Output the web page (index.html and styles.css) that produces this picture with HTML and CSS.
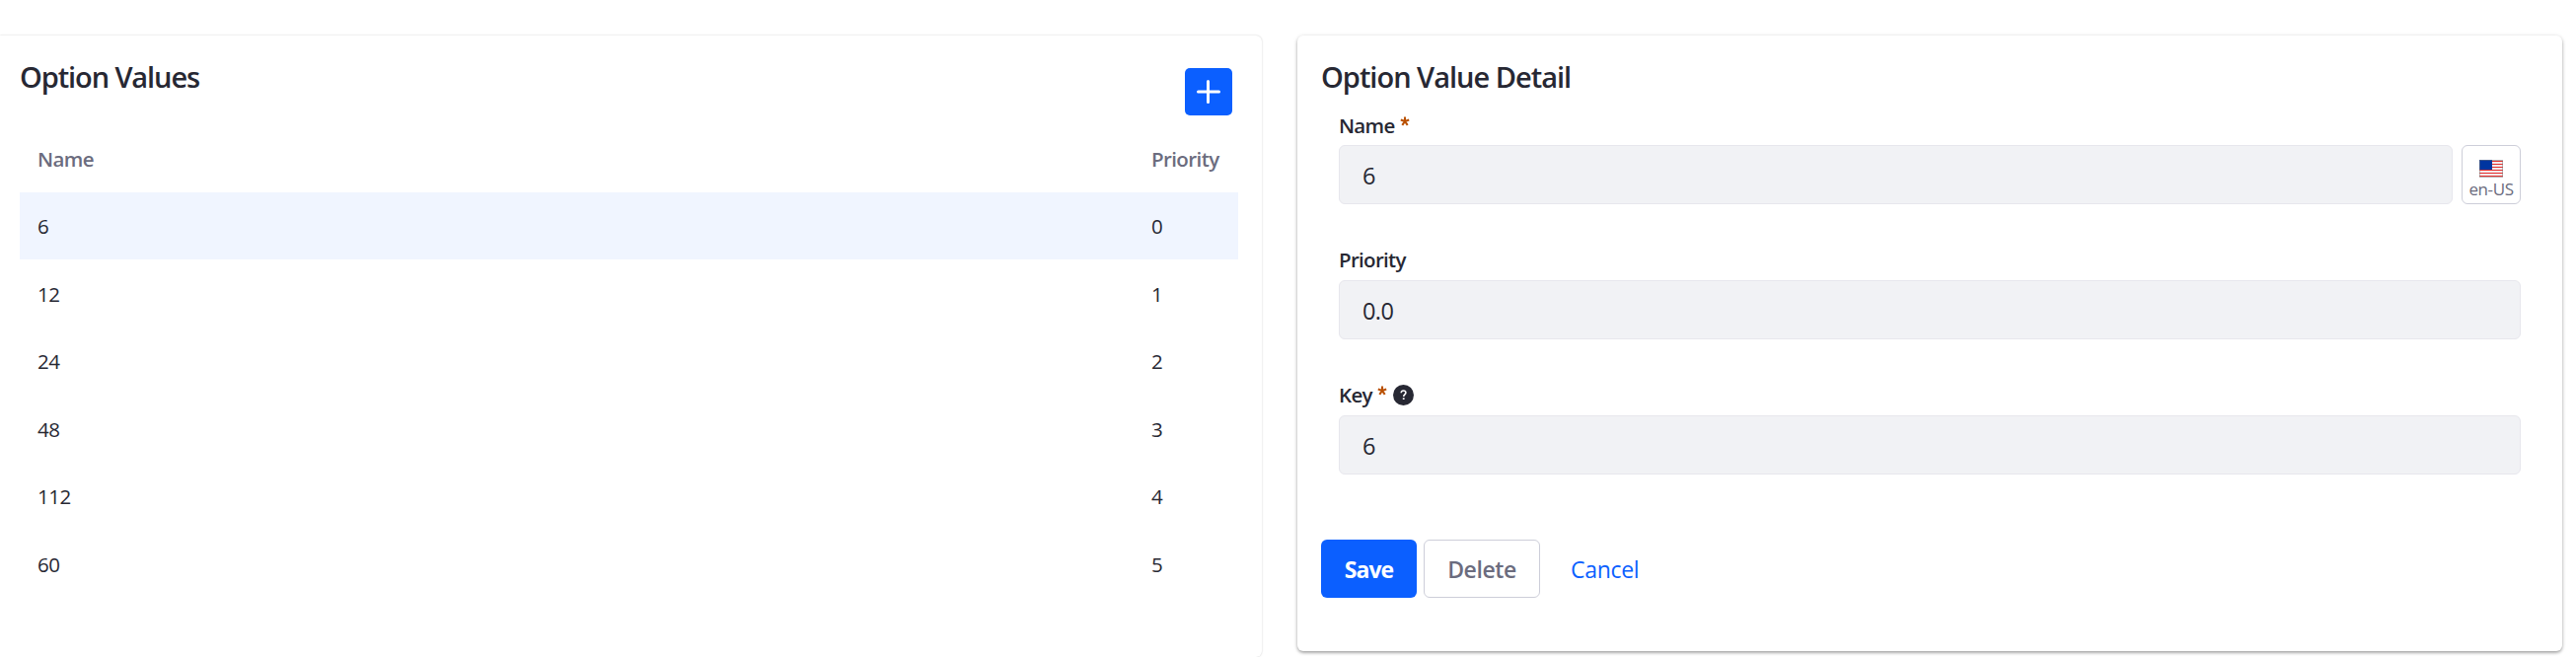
FILE: index.html
```
<!DOCTYPE html>
<html lang="en">
<head>
<meta charset="utf-8">
<title>Option Values</title>
<link rel="stylesheet" href="styles.css">
</head>
<body>
<main class="layout">
  <section class="card card-list">
    <header class="list-header">
      <h2 class="title title-list">Option Values</h2>
      <button class="add" aria-label="Add">
        <svg width="24" height="24" viewBox="0 0 24 24"><path d="M11.5 1.5v21M1.5 12h21" stroke="#fff" stroke-width="3" stroke-linecap="round"/></svg>
      </button>
    </header>
    <div class="table">
      <div class="row head"><span>Name</span><span>Priority</span></div>
      <div class="row active"><span>6</span><span>0</span></div>
      <div class="row"><span>12</span><span>1</span></div>
      <div class="row"><span>24</span><span>2</span></div>
      <div class="row"><span>48</span><span>3</span></div>
      <div class="row"><span>112</span><span>4</span></div>
      <div class="row"><span>60</span><span>5</span></div>
    </div>
  </section>
  <section class="card card-detail">
    <h2 class="title title-detail">Option Value Detail</h2>
    <div class="fields">
      <div class="field">
        <div class="label"><span>Name</span><svg class="star" width="10" height="10" viewBox="0 0 10 10"><path d="M5 5V.4M5 5L.8 3.6M5 5l4.2-1.4M5 5L2.3 8.8M5 5l2.7 3.8" stroke="#b95000" stroke-width="2.1"/></svg></div>
        <div class="control">
          <div class="input">6</div>
          <button class="locale">
            <svg width="24" height="18" viewBox="0 0 24 18" shape-rendering="crispEdges"><path fill="#f3e9ec" d="M0 0h24v18H0z"/><path fill="#e5312f" d="M0 1h24v1H0zM0 4h24v1H0zM0 7h24v1H0zM0 10h24v1H0zM0 13h24v1H0zM0 16h24v1H0z"/><path fill="#0035a0" d="M0 0h13v10H0z"/><path fill="none" stroke="#777" stroke-opacity=".5" d="M.5.5h23v17H.5z"/></svg>
            <span>en-US</span>
          </button>
        </div>
      </div>
      <div class="field">
        <div class="label"><span>Priority</span></div>
        <div class="control"><div class="input">0.0</div></div>
      </div>
      <div class="field">
        <div class="label"><span>Key</span><svg class="star" width="10" height="10" viewBox="0 0 10 10"><path d="M5 5V.4M5 5L.8 3.6M5 5l4.2-1.4M5 5L2.3 8.8M5 5l2.7 3.8" stroke="#b95000" stroke-width="2.1"/></svg><svg class="help" width="21" height="21" viewBox="0 0 21 21"><circle cx="10.5" cy="10.5" r="10.5" fill="#272833"/><path d="M8.2 8.2c.1-1.5 1-2.2 2.3-2.2 1.4 0 2.4.8 2.4 2.1 0 1.7-2.2 1.8-2.2 3.8" fill="none" stroke="#fff" stroke-width="1.6"/><path d="M9.8 13.3h1.8V15H9.8z" fill="#fff"/></svg></div>
        <div class="control"><div class="input">6</div></div>
      </div>
    </div>
    <footer class="actions">
      <button class="btn save">Save</button>
      <button class="btn delete">Delete</button>
      <a class="cancel">Cancel</a>
    </footer>
  </section>
</main>
</body>
</html>
```
FILE: styles.css
```
* { box-sizing: border-box; }
body {
  margin: 0;
  height: 666px;
  overflow: hidden;
  background: #fff;
  color: #272833;
  font-family: "Open Sans", "Noto Sans", sans-serif;
}
button { font-family: inherit; padding: 0; }
.layout {
  display: grid;
  grid-template-columns: 1279px 1282px;
  gap: 36px;
  align-items: start;
  padding-top: 36px;
}
.card { background: #fff; }
.card-list {
  height: 630px;
  padding: 20px 24px 0 20px;
  border-radius: 0 6px 6px 0;
  box-shadow: 0 0 2px rgba(0, 0, 0, .22);
}
.card-detail {
  height: 624px;
  padding: 20px 42px 0 24px;
  border-radius: 6px;
  box-shadow: 0 1px 5px -1px rgba(0, 0, 0, .3), 0 2px 3px 0 rgba(0, 0, 0, .22);
}
.title { margin: 0; font-size: 29px; line-height: 44px; font-weight: 600; white-space: nowrap; }
.title-list { letter-spacing: -1.1px; }
.title-detail { letter-spacing: -1px; }
.list-header { display: flex; justify-content: space-between; height: 73px; padding-right: 6px; }
.add {
  display: grid;
  place-items: center;
  width: 48px;
  height: 48px;
  margin-top: 13px;
  border: 0;
  border-radius: 5px;
  background: #0b5fff;
}
.row {
  display: grid;
  grid-template-columns: 1129px 1fr;
  align-items: center;
  height: 68.5px;
  padding-left: 18px;
  font-size: 20.5px;
  letter-spacing: -.5px;
}
.head { height: 66px; padding-bottom: 2px; color: #6b6c7e; font-weight: 600; letter-spacing: -.6px; }
.active { background: linear-gradient(#f0f5ff 68px, #fff 68px); }
.fields { padding-left: 18px; }
.field { height: 137px; }
.label { display: flex; height: 47px; padding-top: 12px; font-size: 20.5px; line-height: 30px; font-weight: 600; letter-spacing: -.7px; }
.field + .field .label { padding-top: 11px; }
.star { margin: 6px 0 0 5px; }
.help { margin: 5px 0 0 6px; }
.control { display: flex; gap: 9px; }
.input {
  flex: 1;
  height: 60px;
  padding-left: 23px;
  border: 1px solid #e7e7ed;
  border-radius: 6px;
  background: #f1f2f5;
  font-size: 23.5px;
  line-height: 60px;
  letter-spacing: -.6px;
}
.locale {
  display: flex;
  flex-direction: column;
  align-items: center;
  width: 60px;
  height: 60px;
  padding-top: 14px;
  border: 1px solid #cdced9;
  border-radius: 6px;
  background: #fff;
  color: #6b6c7e;
  font-size: 17px;
  line-height: 23px;
  letter-spacing: -.4px;
}
.actions { display: flex; align-items: center; margin-top: 36px; font-size: 23px; }
.btn { height: 59px; border-radius: 6px; font-size: 23px; font-weight: 700; }
.save { width: 97px; margin-right: 7px; border: 0; background: #0b5fff; color: #fff; letter-spacing: -.9px; }
.delete { width: 118px; border: 1px solid #cdced9; background: #fff; color: #6b6c7e; font-weight: 600; letter-spacing: -.4px; }
.cancel { margin-left: 31px; color: #0b5fff; letter-spacing: -.3px; }
```
